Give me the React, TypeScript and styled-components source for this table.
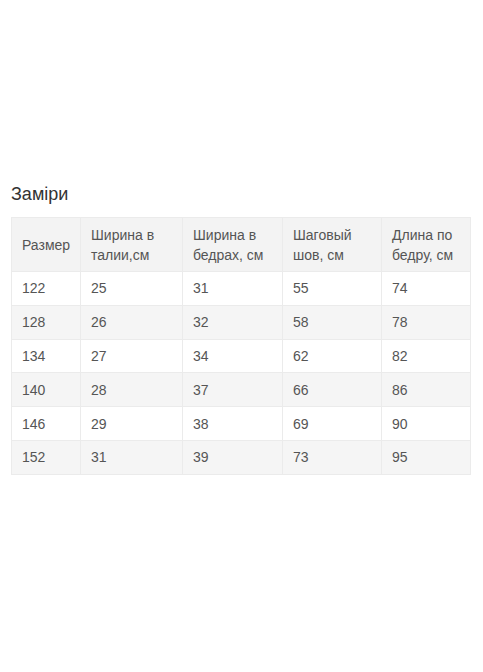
import styled, { createGlobalStyle } from 'styled-components'

const GlobalStyle = createGlobalStyle`
  html, body {
    margin: 0;
    padding: 0;
    background: #ffffff;
  }
  body {
    font-family: 'Liberation Sans', Arial, sans-serif;
  }
`

const Page = styled.div`
  width: 483px;
  height: 672px;
  padding: 183px 13px 0 11px;
  box-sizing: border-box;
`

const Title = styled.h2`
  margin: 0 0 12px;
  font-size: 18px;
  line-height: 22px;
  font-weight: 400;
  color: #333333;
`

const Table = styled.table`
  width: 459px;
  border-collapse: collapse;
  table-layout: fixed;
  font-size: 14px;
  line-height: 20px;
  color: #555555;
`

const Row = styled.tr<{ $striped?: boolean }>`
  background: ${(p) => (p.$striped ? '#f5f5f5' : '#ffffff')};
`

const HeadRow = styled.tr`
  background: #f3f3f3;
`

const Th = styled.th`
  text-align: left;
  font-weight: 400;
  padding: 6.5px 10px;
  border: 1px solid #ebebeb;
  vertical-align: middle;
`

const Td = styled.td`
  padding: 6.4px 10px;
  border: 1px solid #ebebeb;
`

interface ISize {
  size: number
  waist: number
  hips: number
  inseam: number
  length: number
}

const sizes: ISize[] = [
  { size: 122, waist: 25, hips: 31, inseam: 55, length: 74 },
  { size: 128, waist: 26, hips: 32, inseam: 58, length: 78 },
  { size: 134, waist: 27, hips: 34, inseam: 62, length: 82 },
  { size: 140, waist: 28, hips: 37, inseam: 66, length: 86 },
  { size: 146, waist: 29, hips: 38, inseam: 69, length: 90 },
  { size: 152, waist: 31, hips: 39, inseam: 73, length: 95 },
]

function App() {
  return (
    <Page>
      <GlobalStyle />
      <Title>Заміри</Title>
      <Table>
        <colgroup>
          <col style={{ width: 69 }} />
          <col style={{ width: 102 }} />
          <col style={{ width: 100 }} />
          <col style={{ width: 99 }} />
          <col style={{ width: 89 }} />
        </colgroup>
        <thead>
          <HeadRow>
            <Th>Размер</Th>
            <Th>
              Ширина в<br />
              талии,см
            </Th>
            <Th>
              Ширина в<br />
              бедрах, см
            </Th>
            <Th>
              Шаговый<br />
              шов, см
            </Th>
            <Th>
              Длина по<br />
              бедру, см
            </Th>
          </HeadRow>
        </thead>
        <tbody>
          {sizes.map((s, i) => (
            <Row key={s.size} $striped={i % 2 === 1}>
              <Td>{s.size}</Td>
              <Td>{s.waist}</Td>
              <Td>{s.hips}</Td>
              <Td>{s.inseam}</Td>
              <Td>{s.length}</Td>
            </Row>
          ))}
        </tbody>
      </Table>
    </Page>
  )
}

export default App
